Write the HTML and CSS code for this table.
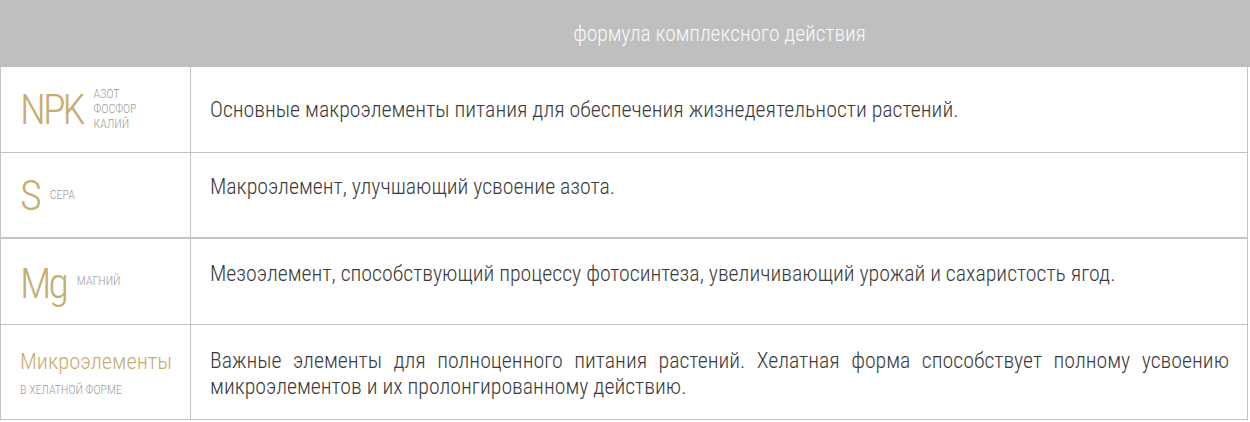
FILE: index.html
```html
<!DOCTYPE html>
<html lang="ru">
<head>
<meta charset="utf-8">
<title>Формула комплексного действия</title>
<link rel="stylesheet" href="styles.css">
</head>
<body>
<div class="formula">
  <div class="formula-head">
    <div class="head-spacer"></div>
    <div class="head-title">формула комплексного действия</div>
  </div>
  <div class="formula-table">
    <div class="row row-npk">
      <div class="elem">
        <span class="sym">NPK</span>
        <span class="note note-stack">азот<br>фосфор<br>калий</span>
      </div>
      <div class="desc">Основные макроэлементы питания для обеспечения жизнедеятельности растений.</div>
    </div>
    <div class="row row-s">
      <div class="elem">
        <span class="sym">S</span>
        <span class="note">сера</span>
      </div>
      <div class="desc desc-raised">Макроэлемент, улучшающий усвоение азота.</div>
    </div>
    <div class="row row-mg">
      <div class="elem">
        <span class="sym">Mg</span>
        <span class="note">магний</span>
      </div>
      <div class="desc desc-raised">Мезоэлемент, способствующий процессу фотосинтеза, увеличивающий урожай и сахаристость ягод.</div>
    </div>
    <div class="row row-micro">
      <div class="elem elem-col">
        <span class="sym-word">Микроэлементы</span>
        <span class="note">в хелатной форме</span>
      </div>
      <div class="desc desc-justify">Важные элементы для полноценного питания растений. Хелатная форма способствует полному усвоению микроэлементов и их пролонгированному действию.</div>
    </div>
  </div>
</div>
</body>
</html>
```
FILE: styles.css
```css
html, body {
  margin: 0;
  padding: 0;
  background: #ffffff;
}

body {
  font-family: "Roboto", "Liberation Sans Narrow", "DejaVu Sans Condensed", sans-serif;
  font-stretch: 75%;
  font-weight: 300;
  color: #3b3b3b;
}

.formula {
  width: 1250px;
}

.formula-head {
  display: grid;
  grid-template-columns: 192px 1fr;
  height: 67px;
  background: #bfbfbf;
  align-items: center;
}

.head-title {
  text-align: center;
  color: #f8f8f8;
  font-size: 21.5px;
  padding-right: 3px;
}

.formula-table {
  width: 1246px;
  border-left: 1px solid #c4c4c4;
  border-right: 1px solid #c4c4c4;
}

.row {
  display: grid;
  grid-template-columns: 190px 1fr;
  border-bottom: 1px solid #c4c4c4;
}

.row-npk { height: 85px; }
.row-s { height: 84px; border-bottom-width: 2px; }
.row-mg { height: 85px; }
.row-micro { height: 94px; }

.elem {
  border-right: 1px solid #c4c4c4;
  display: flex;
  align-items: center;
  padding-left: 19px;
  gap: 11px;
}

.elem-col {
  flex-direction: column;
  align-items: flex-start;
  justify-content: center;
  gap: 10px;
  padding-top: 2px;
}

.sym {
  font-size: 42px;
  line-height: 42px;
  letter-spacing: -3px;
  color: #c8ad70;
}

.row-s .sym { padding-top: 2px; }
.row-mg .sym { padding-top: 4px; }

.sym-word {
  font-size: 22.5px;
  line-height: 24px;
  color: #c8ad70;
}

.note {
  font-size: 12px;
  line-height: 15px;
  text-transform: uppercase;
  color: #9c9c9c;
}

.note-stack {
  line-height: 15px;
  padding-bottom: 1px;
}

.desc {
  display: flex;
  align-items: center;
  padding: 0 18px 0 19px;
  font-size: 21.85px;
  line-height: 26px;
}

.desc-raised {
  padding-bottom: 16px;
}

.desc-justify {
  display: block;
  text-align: justify;
  padding-top: 23px;
}
```
